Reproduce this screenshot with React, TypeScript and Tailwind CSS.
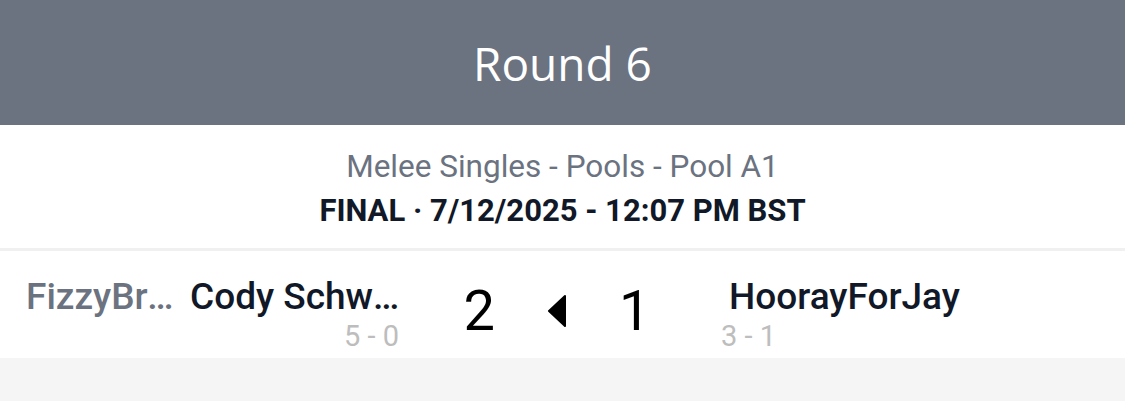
import React from 'react';

export default function App() {
  return (
    <div className="min-h-[401px] bg-[#f5f5f5] font-['Roboto',sans-serif]">
      {/* round header */}
      <div className="h-[125px] bg-[#6b7280] flex items-center justify-center">
        <h1 className="font-['Open_Sans',sans-serif] text-[46px] leading-none text-white">Round 6</h1>
      </div>

      {/* event info */}
      <div className="h-[126px] bg-white flex flex-col items-center justify-center border-b-[3px] border-[#f0f0f0]">
        <p className="mt-[4px] text-[31.5px] leading-[40px] text-[#6b7280]">Melee Singles - Pools - Pool A1</p>
        <p className="mt-[4px] text-[31px] leading-[40px] font-bold text-[#111827]">FINAL · 7/12/2025 - 12:07 PM BST</p>
      </div>

      {/* match row */}
      <div className="h-[107px] bg-white flex items-center">
        <div className="flex-1 min-w-0 mt-[19px] flex flex-col items-end">
          <div className="flex items-baseline gap-[12px] text-[37px] leading-[44px] font-medium">
            <span className="w-[152px] truncate text-[#6b7280]">FizzyBrew Gaming</span>
            <span className="w-[214px] truncate text-[#111827]">Cody Schwab</span>
          </div>
          <span className="pr-[5px] text-[29px] leading-[34px] text-[#bdbdbd]">5 - 0</span>
        </div>

        <div className="w-[306px] mt-[13px] flex items-center justify-center gap-[52px] text-[56px] leading-none text-black">
          <span>2</span>
          <svg width="20" height="32" viewBox="0 0 20 32">
            <path d="M18 1 L2 16 L18 31 Z" fill="#000" stroke="#000" strokeWidth="2" strokeLinejoin="round" />
          </svg>
          <span>1</span>
        </div>

        <div className="flex-1 min-w-0 mt-[19px] flex flex-col items-start pl-[11px]">
          <span className="text-[37px] leading-[44px] font-medium text-[#111827] pl-[8px]">HoorayForJay</span>
          <span className="text-[29px] leading-[34px] text-[#bdbdbd]">3 - 1</span>
        </div>
      </div>
    </div>
  );
}
